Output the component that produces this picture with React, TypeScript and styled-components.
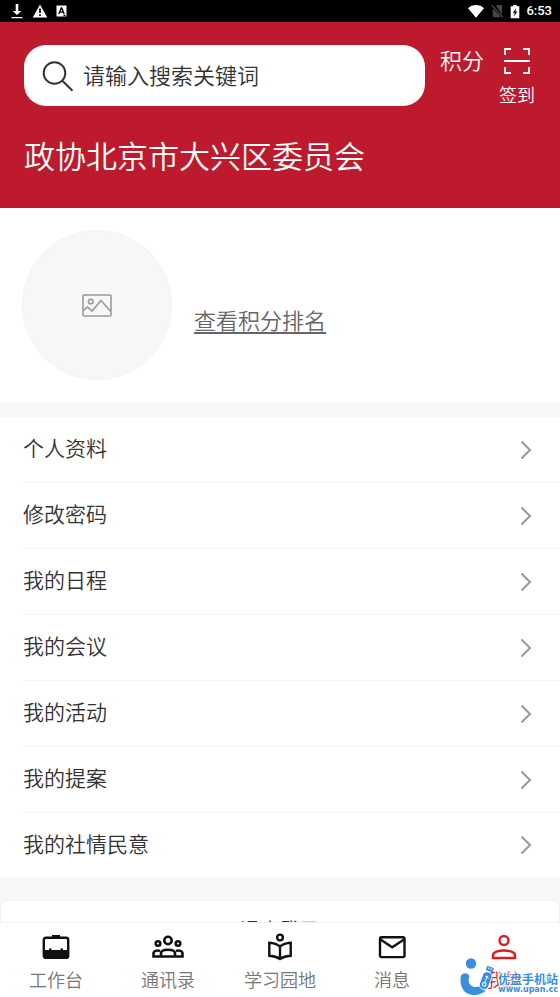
import React from "react";
import styled, { createGlobalStyle } from "styled-components";

const GlobalStyle = createGlobalStyle`
  * { box-sizing: border-box; }
  body {
    margin: 0;
    background: #fff;
    font-family: "Noto Sans CJK SC", sans-serif;
    font-weight: 350;
    color: #333;
  }
  button, input { font: inherit; color: inherit; border: 0; background: none; padding: 0; }
  button { cursor: pointer; }
  svg { display: block; flex: none; }
`;

const Screen = styled.div`
  position: relative;
  display: flex;
  flex-direction: column;
  height: 100vh;
  overflow: hidden;
`;

const StatusBar = styled.div`
  display: flex;
  flex: none;
  align-items: center;
  justify-content: space-between;
  height: 22px;
  padding: 0 8px 0 10px;
  background: #000;
  color: #fff;
`;

const StatusGroup = styled.div<{ $gap: number }>`
  display: flex;
  align-items: center;
  gap: ${(p) => p.$gap}px;
`;

const Clock = styled.time`
  font-family: Roboto, sans-serif;
  font-size: 13px;
  font-weight: 500;
  line-height: 22px;
`;

const Header = styled.header`
  flex: none;
  padding: 23px 25px 31px 24px;
  background: #bd1b2d;
  color: #fff;
`;

const HeaderRow = styled.div`
  display: flex;
  align-items: flex-start;
`;

const SearchBox = styled.label`
  display: flex;
  flex: 1;
  min-width: 0;
  align-items: center;
  gap: 9px;
  height: 61px;
  padding: 0 18px;
  border-radius: 22px;
  background: #fff;
  color: #333;
`;

const SearchInput = styled.input`
  flex: 1;
  min-width: 0;
  padding-bottom: 3px;
  font-size: 22px;
  line-height: 32px;
  outline: none;
  &::placeholder { color: #333; opacity: 1; }
`;

const PointsButton = styled.button`
  margin-left: 15px;
  font-size: 22px;
  line-height: 28px;
`;

const SignButton = styled.button`
  display: flex;
  flex-direction: column;
  align-items: center;
  gap: 6px;
  margin-left: 15px;
  padding-top: 2px;
  font-size: 18px;
  line-height: 26px;
`;

const Title = styled.h1`
  margin: 26px 0 0;
  font-size: 31px;
  font-weight: 350;
  line-height: 44px;
`;

const Content = styled.main`
  flex: 1;
  min-height: 0;
  overflow-y: auto;
  scrollbar-width: none;
  background: #f8f8f8;
`;

const Profile = styled.section`
  display: flex;
  align-items: center;
  gap: 22px;
  padding: 22px;
  background: #fff;
`;

const Avatar = styled.div`
  display: grid;
  place-items: center;
  width: 150px;
  height: 150px;
  border: 1px solid #f4f4f4;
  border-radius: 50%;
  background: #f7f7f7;
`;

const RankLink = styled.a`
  margin-top: 28px;
  color: #666;
  font-size: 22px;
  line-height: 32px;
  text-decoration: underline;
  text-decoration-thickness: 2px;
  text-underline-offset: 3px;
`;

const Menu = styled.nav`
  margin-top: 15px;
  padding-left: 23px;
  background: #fff;
`;

const MenuItem = styled.a`
  display: flex;
  align-items: center;
  justify-content: space-between;
  height: 66px;
  padding-right: 28px;
  border-bottom: 1px solid #f6f6f6;
  color: #333;
  font-size: 21px;
  line-height: 30px;
  text-decoration: none;
  &:last-child { height: 64px; border-bottom: 0; }
`;

const MenuLabel = styled.span`
  padding-bottom: 5px;
`;

const Logout = styled.button`
  display: block;
  width: 100%;
  margin-top: 23px;
  padding: 14px 0;
  border: 1px solid #f0f0f0;
  border-radius: 6px;
  background: #fff;
  font-size: 20px;
  line-height: 30px;
`;

const TabBar = styled.nav`
  display: grid;
  flex: none;
  grid-template-columns: repeat(5, 1fr);
  height: 75px;
  border-top: 1px solid #f2f2f2;
  background: #fff;
`;

const Tab = styled.a<{ $active?: boolean }>`
  display: flex;
  flex-direction: column;
  align-items: center;
  gap: 5px;
  padding-top: 10px;
  color: ${(p) => (p.$active ? "#d81e1e" : "#777")};
  font-size: 18px;
  line-height: 26px;
  text-decoration: none;
  svg { color: ${(p) => (p.$active ? "#d81e1e" : "#111")}; }
`;

const Watermark = styled.div`
  position: absolute;
  right: 2px;
  bottom: 0;
  display: flex;
  align-items: flex-end;
  color: #3b8ede;
  pointer-events: none;
`;

const WatermarkText = styled.div`
  display: flex;
  flex-direction: column;
  align-items: flex-end;
  padding-bottom: 3px;
  text-shadow: 1px 0 1px #fff, -1px 0 1px #fff, 0 1px 1px #fff, 0 -1px 1px #fff, 0 0 2px #fff, 0 0 2px #fff;
`;

const WatermarkName = styled.span`
  font-size: 12px;
  font-weight: 700;
  line-height: 14px;
`;

const WatermarkUrl = styled.span`
  font-family: "DejaVu Sans", sans-serif;
  font-size: 8px;
  font-weight: 700;
  line-height: 8px;
`;

const line = { fill: "none", stroke: "currentColor" } as const;

const DownloadIcon = () => (
  <svg width="14" height="16" viewBox="0 0 14 16" fill="currentColor">
    <path d="M5.700 1h2.600v7h3L7 12 2.700 8h3zM1.500 14h11v1.300h-11z" />
  </svg>
);
const WarningIcon = () => (
  <svg width="16" height="14" viewBox="0 0 16 14">
    <path d="M8 .5 15.300 13.500H.7z" fill="currentColor" />
    <path d="M8 4.500v4.500M8 10.300v1.700" stroke="#000" strokeWidth="1.700" />
  </svg>
);
const LetterIcon = () => (
  <svg width="11" height="12" viewBox="0 0 11 12">
    <rect x=".5" y=".5" width="10" height="11" rx=".7" fill="currentColor" />
    <path d="M2.800 9 5.300 3h.4L8.200 9M3.700 7.200h3.600M7.500 10.500h2" fill="none" stroke="#000" strokeWidth="1.300" />
  </svg>
);
const WifiIcon = () => (
  <svg width="18" height="15" viewBox="0 0 18 15">
    <path d="M1 4.200C5.500 0 12.500 0 17 4.200L9 13.700z" fill="currentColor" />
  </svg>
);
const NoSimIcon = () => (
  <svg width="13" height="14" viewBox="0 0 13 14">
    <path d="M4.500 1H11v9.500zM1.800 4.500v8.700h8.400z" fill="#484848" />
    <path d="m1 1.500 11 12" stroke="#484848" strokeWidth="1.200" />
  </svg>
);
const BatteryIcon = () => (
  <svg width="10" height="15" viewBox="0 0 10 15">
    <path d="M3.200 1h3.600v1.300H9.300V14.300H.7V2.300h2.500z" fill="currentColor" />
    <path d="M6.200 4 2.800 8.800h1.900L4 12.600l3.300-5H5.400z" fill="#000" />
  </svg>
);
const SearchIcon = () => (
  <svg width="32" height="32" viewBox="0 0 32 32" {...line} strokeWidth="2">
    <circle cx="12.500" cy="13" r="10.800" />
    <path d="m20.300 20.700 10.200 10" />
  </svg>
);
const ScanIcon = () => (
  <svg width="28" height="28" viewBox="0 0 28 28" {...line} strokeWidth="1.800">
    <path d="M2 8V2h6M20 2h6v6M26 20v6h-6M8 26H2v-6M1 14h26" />
  </svg>
);
const PictureIcon = () => (
  <svg width="30" height="23" viewBox="0 0 30 23" {...line} strokeWidth="1.600" color="#999">
    <rect x="1" y="1" width="28" height="21" rx="1" />
    <circle cx="8.700" cy="7.500" r="2.300" />
    <path d="m1.500 16.500 3.800-3.600L10 17l9-10.500 9.700 11" />
  </svg>
);
const ChevronIcon = () => (
  <svg width="12" height="20" viewBox="0 0 12 20" {...line} strokeWidth="2" color="#999">
    <path d="m1.500 1.500 8.500 8.500-8.500 8.500" />
  </svg>
);
const BriefcaseIcon = () => (
  <svg width="32" height="28" viewBox="0 0 32 28" {...line} strokeWidth="2.400">
    <path d="M12 3.200h8" />
    <rect x="3.800" y="4.800" width="24.400" height="20" rx="2" />
    <path d="M4 17h5v-1.500h2.500V17h9v-1.500H23V17h5v8.500H4z" fill="currentColor" stroke="none" />
  </svg>
);
const GroupIcon = () => (
  <svg width="32" height="28" viewBox="0 0 32 28" {...line} strokeWidth="2.600">
    <circle cx="16" cy="7.500" r="3.700" />
    <circle cx="6" cy="10.500" r="2.300" />
    <circle cx="26" cy="10.500" r="2.300" />
    <path d="M9 23.500v-3.200c0-4.800 14-4.800 14 0v3.200zM9 23.500H1.500v-3c0-2.700 3.500-3.500 6.500-2.500M23 23.500h7.500v-3c0-2.700-3.500-3.500-6.500-2.500" />
  </svg>
);
const ReaderIcon = () => (
  <svg width="32" height="28" viewBox="0 0 32 28" {...line} strokeWidth="2.400">
    <circle cx="16" cy="4.500" r="2.900" />
    <path d="M16 13.500C13 11 9 10 5.300 9.800v13C9 23 13 24 16 26c3-2 7-3 10.700-3.200v-13C23 10 19 11 16 13.500zM16 13.500V26" />
  </svg>
);
const MailIcon = () => (
  <svg width="32" height="28" viewBox="0 0 32 28" {...line} strokeWidth="2.400">
    <rect x="4" y="4.300" width="24.500" height="19.800" rx="1.600" />
    <path d="m4.500 6.500 11.700 7.700L28 6.500" />
  </svg>
);
const PersonIcon = () => (
  <svg width="32" height="28" viewBox="0 0 32 28" {...line} strokeWidth="2.400">
    <circle cx="16" cy="7.500" r="4.500" />
    <path d="M5 25v-2.700c0-6.400 22-6.400 22 0V25z" />
  </svg>
);
const WatermarkLogo = () => (
  <svg width="38" height="40" viewBox="1 0 38 40" fill="currentColor">
    <circle cx="12" cy="6.500" r="5.200" />
    <path d="M2 18.500c2.700-3.200 7-2.700 8.300.4C8 27 12 31.500 20 29.500l6.500 4.500C20 39.500 10 39.500 5 34 1.500 29.500.8 23.500 2 18.500z" />
    <g transform="translate(-1 -1) rotate(20 29 23)">
      <rect x="23.500" y="16" width="9.500" height="18" rx="4.200" stroke="#fff" strokeWidth=".8" />
      <path d="M24.800 10.500h7V15h-7z" />
      <path d="M26.500 12.300h1.200M29 12.300h1.200" stroke="#fff" strokeWidth="1.500" />
      <circle cx="28.300" cy="29" r="1.800" fill="none" stroke="#fff" strokeWidth="1" />
      <path d="M28.300 27v-7M26.800 22l1.500-2 1.500 2" fill="none" stroke="#fff" strokeWidth=".8" />
    </g>
  </svg>
);

const menuItems = ["个人资料", "修改密码", "我的日程", "我的会议", "我的活动", "我的提案", "我的社情民意"];

const tabs = [
  { label: "工作台", Icon: BriefcaseIcon },
  { label: "通讯录", Icon: GroupIcon },
  { label: "学习园地", Icon: ReaderIcon },
  { label: "消息", Icon: MailIcon },
  { label: "我的", Icon: PersonIcon, active: true },
];

export default function App() {
  return (
    <Screen>
      <GlobalStyle />
      <StatusBar>
        <StatusGroup $gap={8}>
          <DownloadIcon />
          <WarningIcon />
          <LetterIcon />
        </StatusGroup>
        <StatusGroup $gap={6}>
          <WifiIcon />
          <NoSimIcon />
          <BatteryIcon />
          <Clock>6:53</Clock>
        </StatusGroup>
      </StatusBar>
      <Header>
        <HeaderRow>
          <SearchBox>
            <SearchIcon />
            <SearchInput type="search" placeholder="请输入搜索关键词" aria-label="请输入搜索关键词" />
          </SearchBox>
          <PointsButton type="button">积分</PointsButton>
          <SignButton type="button">
            <ScanIcon />
            签到
          </SignButton>
        </HeaderRow>
        <Title>政协北京市大兴区委员会</Title>
      </Header>
      <Content>
        <Profile>
          <Avatar>
            <PictureIcon />
          </Avatar>
          <RankLink href="#rank">查看积分排名</RankLink>
        </Profile>
        <Menu>
          {menuItems.map((label) => (
            <MenuItem key={label} href="#menu">
              <MenuLabel>{label}</MenuLabel>
              <ChevronIcon />
            </MenuItem>
          ))}
        </Menu>
        <Logout type="button">退出登录</Logout>
      </Content>
      <TabBar>
        {tabs.map(({ label, Icon, active }) => (
          <Tab key={label} href="#tab" $active={active}>
            <Icon />
            {label}
          </Tab>
        ))}
      </TabBar>
      <Watermark>
        <WatermarkLogo />
        <WatermarkText>
          <WatermarkName>优盘手机站</WatermarkName>
          <WatermarkUrl>www.upan.cc</WatermarkUrl>
        </WatermarkText>
      </Watermark>
    </Screen>
  );
}
